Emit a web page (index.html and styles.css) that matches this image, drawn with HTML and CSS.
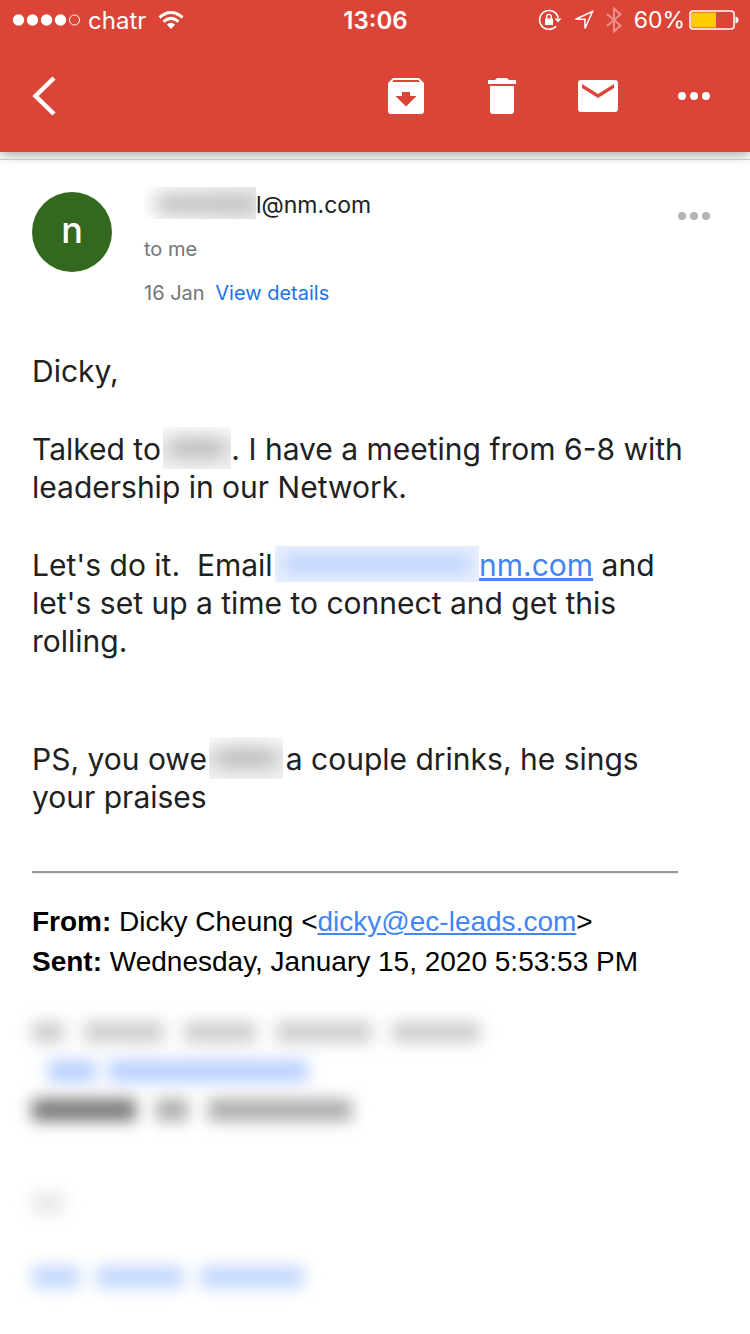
FILE: index.html
```html
<!DOCTYPE html>
<html lang="en">
<head>
  <meta charset="UTF-8" />
  <meta name="viewport" content="width=device-width, initial-scale=1.0"/>
  <title>Mail</title>
  <link rel="stylesheet" href="styles.css">
</head>
<body>
  <header class="header">
    <div class="status">
      <div class="status-left">
        <svg width="68" height="14" viewBox="0 0 68 14" fill="#fff">
          <circle cx="6.500" cy="7" r="5.700"/>
          <circle cx="20.500" cy="7" r="5.700"/>
          <circle cx="34.500" cy="7" r="5.700"/>
          <circle cx="48.500" cy="7" r="5.700"/>
          <circle cx="62.500" cy="7" r="5" fill="none" stroke="#fff"/>
        </svg>
        <span class="carrier">chatr</span>
        <svg width="26" height="20" viewBox="0 0 26 20" fill="none" stroke="#fff" stroke-width="3">
          <path d="M1.500 7.500Q13 -2.500 24.500 7.500"/>
          <path d="M5.500 11.700Q13 5 20.500 11.700"/>
          <path d="M8.800 14.600Q13 10.700 17.200 14.600L13 19Z" fill="#fff" stroke="none"/>
        </svg>
      </div>
      <div class="time">13:06</div>
      <div class="status-right">
        <svg width="24" height="22" viewBox="0 0 24 22">
          <path d="M20.200 9A9.400 9.400 0 1 0 18 17.200" fill="none" stroke="#fff" stroke-width="1.600"/>
          <path d="M16.500 9.500H23.500L20 13.500Z" fill="#fff"/>
          <rect x="7" y="9.500" width="8" height="6.500" fill="#fff"/>
          <path d="M8.700 10V7.700a2.300 2.300 0 0 1 4.600 0V10" fill="none" stroke="#fff" stroke-width="1.400"/>
        </svg>
        <svg width="20" height="20" viewBox="0 0 20 20" fill="none" stroke="#fff" stroke-width="1.500">
          <path d="M18.500 1.500L1.500 9.300H11V18.500Z"/>
        </svg>
        <svg class="bluetooth" width="16" height="26" viewBox="0 0 16 26" fill="none" stroke="#fff" stroke-width="2">
          <path d="M1 7L14.500 18.500L8 24.500V1.500L14.500 7.500L1 19"/>
        </svg>
        <span class="percent">60%</span>
        <svg width="50" height="20" viewBox="0 0 50 20">
          <rect x="1" y="1" width="44" height="18" rx="3" fill="none" stroke="#fff" stroke-width="1.500"/>
          <rect x="2" y="2.500" width="25" height="15" fill="#fc0"/>
          <path d="M46.500 6.500q3 .5 3 3.500t-3 3.500z" fill="#fff"/>
        </svg>
      </div>
    </div>
    <nav class="toolbar">
      <button class="back" aria-label="Back">
        <svg width="24" height="40" viewBox="0 0 24 40" fill="none" stroke="#fff" stroke-width="4.500">
          <path d="M22 2L3.500 20L22 38"/>
        </svg>
      </button>
      <button aria-label="Archive">
        <svg width="48" height="48" viewBox="0 0 24 24" fill="#fff">
          <path fill-rule="evenodd" d="M5.500 3H18.500L21 5.500V19.500A1.500 1.500 0 0 1 19.500 21H4.500A1.500 1.500 0 0 1 3 19.500V5.500ZM5.800 4L5.100 5H18.900L18.200 4ZM10 10V12H6.700L12 17.300L17.300 12H14V10Z"/>
        </svg>
      </button>
      <button aria-label="Delete">
        <svg width="48" height="48" viewBox="0 0 24 24" fill="#fff">
          <path d="M6 19.500A1.500 1.500 0 0 0 7.500 21H16.500A1.500 1.500 0 0 0 18 19.500V7H6ZM19 4H15.500L14.500 3H9.500L8.500 4H5V6H19Z"/>
        </svg>
      </button>
      <button aria-label="Mark as unread">
        <svg width="48" height="48" viewBox="0 0 24 24" fill="#fff">
          <path fill-rule="evenodd" d="M3.500 4H20.500A1.500 1.500 0 0 1 22 5.500V18.500A1.500 1.500 0 0 1 20.500 20H3.500A1.500 1.500 0 0 1 2 18.500V5.500A1.500 1.500 0 0 1 3.500 4ZM4 6V8L12 13L20 8V6L12 11Z"/>
        </svg>
      </button>
      <button aria-label="More">
        <svg width="48" height="48" viewBox="0 0 48 48" fill="#fff">
          <circle cx="12" cy="24" r="4"/>
          <circle cx="24" cy="24" r="4"/>
          <circle cx="36" cy="24" r="4"/>
        </svg>
      </button>
    </nav>
  </header>

  <main class="message">
    <div class="sender">
      <div class="avatar">n</div>
      <div class="details">
        <div class="address"><span class="hidden hidden-from"></span>l@nm.com</div>
        <div class="to">to me</div>
        <div class="date">16 Jan <a href="#">View details</a></div>
      </div>
      <button class="options" aria-label="Message options">
        <svg width="32" height="8" viewBox="0 0 32 8" fill="#b3b3b3">
          <circle cx="4" cy="4" r="4"/>
          <circle cx="16" cy="4" r="4"/>
          <circle cx="28" cy="4" r="4"/>
        </svg>
      </button>
    </div>

    <div class="body">
      <p>Dicky,</p>
      <p>Talked to <span class="hidden hidden-name"></span>. I have a meeting from 6-8 with<br>leadership in our Network.</p>
      <p>Let's do it.&nbsp; Email <span class="hidden hidden-link"></span><a href="#">nm.com</a> and<br>let's set up a time to connect and get this<br>rolling.</p>
      <p class="ps">PS, you owe <span class="hidden hidden-name"></span> a couple drinks, he sings<br>your praises</p>
    </div>

    <hr>

    <div class="quoted">
      <div><b>From:</b> Dicky Cheung &lt;<a href="#">dicky@ec-leads.com</a>&gt;</div>
      <div><b>Sent:</b> Wednesday, January 15, 2020 5:53:53 PM</div>
    </div>

    <!-- private part of the thread -->
    <div class="private">
      <div class="line"><i class="w32"></i><i class="w80"></i><i class="w72"></i><i class="w96"></i><i class="w88"></i></div>
      <div class="line blue indent"><i class="w48"></i><i class="w200"></i></div>
      <div class="line dark"><i class="w104 strong"></i><i class="w32"></i><i class="w144"></i></div>
      <div class="line faint"><i class="w32"></i></div>
      <div class="line blue pale"><i class="w48"></i><i class="w88"></i><i class="w104"></i></div>
    </div>
  </main>
</body>
</html>
```
FILE: styles.css
```css
body {
  margin: 0;
  font-family: Inter, Roboto, sans-serif;
  background: #fff;
  color: #212121;
}
button {
  padding: 0;
  border: none;
  background: none;
  cursor: pointer;
}
svg {
  display: block;
}
.header {
  background: #db4437;
  color: #fff;
  box-shadow: 0 2px 12px rgba(0, 0, 0, 0.4);
}
.status {
  height: 40px;
  padding: 0 11px 0 12px;
  display: grid;
  grid-template-columns: 1fr auto 1fr;
  align-items: center;
  font-size: 24px;
}
.status-left,
.status-right {
  display: flex;
  align-items: center;
}
.status-left {
  gap: 8px;
}
.carrier {
  margin-right: 4px;
}
.status-right {
  justify-content: flex-end;
  gap: 12px;
}
.percent {
  margin-right: -8px;
  font-size: 23px;
}
.time {
  font-weight: 600;
}
.bluetooth {
  opacity: 0.4;
}
.toolbar {
  height: 112px;
  padding: 0 32px;
  display: flex;
  align-items: center;
  gap: 48px;
}
.back {
  margin-right: auto;
}
.message {
  margin-top: 7px;
  padding: 0 72px 40px 32px;
  border-top: 1px solid #c4c8c4;
}
.sender {
  margin: 24px -32px 0 0;
  display: flex;
  align-items: flex-start;
}
.avatar {
  width: 80px;
  height: 80px;
  margin: 8px 32px 0 0;
  border-radius: 50%;
  background: #33691e;
  color: #fff;
  font-size: 36px;
  font-weight: 500;
  line-height: 76px;
  text-align: center;
}
.details {
  flex: 1;
  color: #757575;
  font-size: 20px;
  line-height: 44px;
}
.address {
  margin-top: -1px;
  color: #212121;
  font-size: 23px;
}
.date a {
  margin-left: 5px;
  color: #1a73e8;
  text-decoration: none;
}
.options {
  padding: 28px 0;
}
.body {
  margin: 37px -32px 0 0;
  font-size: 30px;
  line-height: 38px;
}
.body p {
  margin: 0 0 40px;
}
.body .ps {
  margin-top: 80px;
}
.body a,
.quoted a {
  color: #4285f4;
}
hr {
  height: 1px;
  margin: 55px 0 28px;
  border: none;
  border-top: 2px solid #999;
  background: #eee;
}
.quoted {
  color: #000;
  font-family: "Liberation Sans", Arial, sans-serif;
  font-size: 28px;
  line-height: 40px;
}

/* smudged words inside the text */
.hidden {
  display: inline-block;
  height: 42px;
  margin: -12px 0 -4px -6px;
  overflow: hidden;
  vertical-align: middle;
  background: linear-gradient(#fafafa, #e8e8e8 50%, #f2f2f2);
}
.hidden::before {
  content: "";
  display: block;
  height: 18px;
  margin: 12px 8px;
  background: #bbb;
  filter: blur(9px);
}
.hidden-from {
  width: 112px;
  height: 32px;
  margin-left: 0;
  background: linear-gradient(90deg, #fff, #eee);
}
.hidden-from::before {
  margin: 8px 0 8px 12px;
}
.hidden-name {
  width: 68px;
}
.ps .hidden-name {
  width: 74px;
  margin-right: -6px;
}
.hidden-link {
  width: 204px;
  height: 36px;
  background: #eaf1fe;
}
.hidden-link::before {
  margin: 9px 8px;
  background: #b8cffb;
}

.private {
  margin-top: 30px;
}
.line {
  height: 39px;
  display: flex;
  align-items: center;
  gap: 20px;
  color: #cfcfcf;
}
.line i {
  height: 22px;
  background: currentColor;
  filter: blur(8px);
}
.indent {
  padding-left: 16px;
}
.blue {
  gap: 12px;
  color: #b8d0ff;
}
.dark {
  color: #acacac;
}
.line .strong {
  background: #777;
}
.faint {
  margin: 54px 0 35px;
  color: #e8e8e8;
}
.pale {
  gap: 16px;
  color: #c3d8fd;
}
.w32 { width: 32px; }
.w48 { width: 48px; }
.w72 { width: 72px; }
.w80 { width: 80px; }
.w88 { width: 88px; }
.w96 { width: 96px; }
.w104 { width: 104px; }
.w144 { width: 144px; }
.w200 { width: 200px; }
```
